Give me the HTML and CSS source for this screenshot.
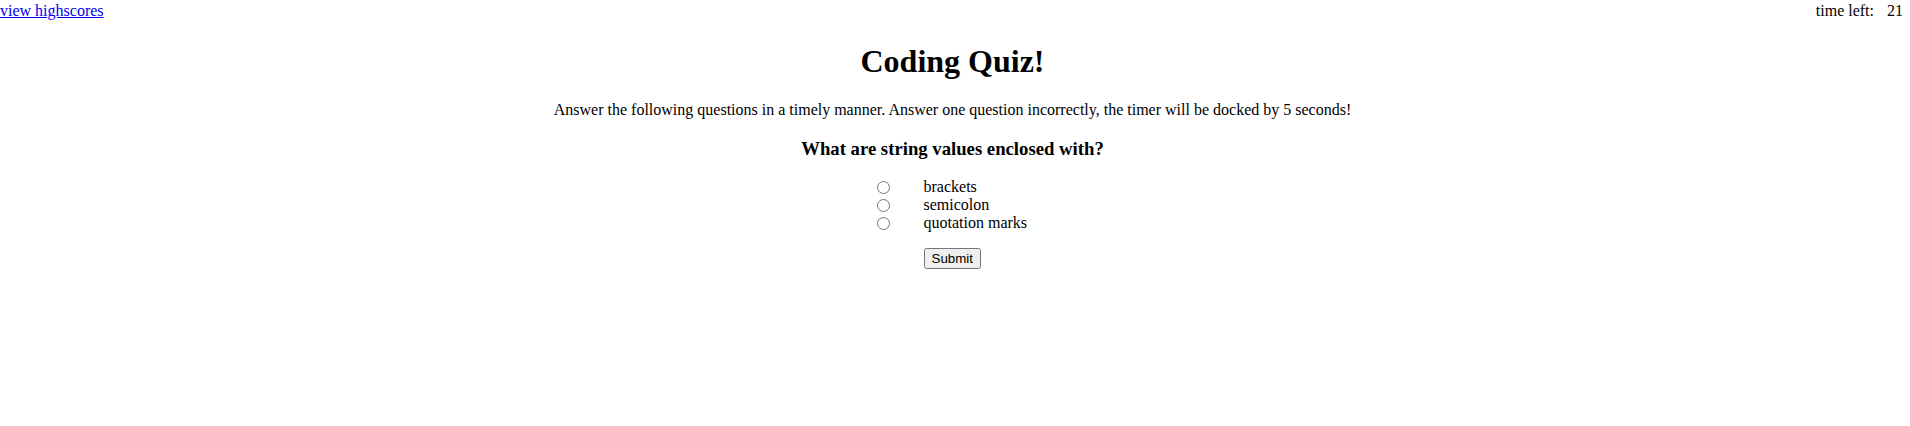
FILE: index.html
```html
<!DOCTYPE html>
<html>
<head>
<meta charset="utf-8">
<title>Coding Quiz</title>
<link rel="stylesheet" href="styles.css">
</head>
<body>
<header class="topbar">
  <a class="scores-link" href="#">view highscores</a>
  <div class="timer"><span class="timer-label">time left:</span><span class="timer-value">21</span></div>
</header>
<main class="quiz">
  <h1 class="title">Coding Quiz!</h1>
  <p class="intro">Answer the following questions in a timely manner. Answer one question incorrectly, the timer will be docked by 5 seconds!</p>
  <h3 class="question">What are string values enclosed with?</h3>
  <form class="answers">
    <label class="choice"><input type="radio" name="a" class="radio"><span class="choice-text">brackets</span></label>
    <label class="choice"><input type="radio" name="a" class="radio"><span class="choice-text">semicolon</span></label>
    <label class="choice"><input type="radio" name="a" class="radio"><span class="choice-text">quotation marks</span></label>
    <div class="submit-row"><button type="button" class="submit">Submit</button></div>
  </form>
</main>
</body>
</html>
```
FILE: styles.css
```css
html, body {
  margin: 0;
  padding: 0;
  background: #ffffff;
}
body {
  font-family: "Liberation Serif", "Times New Roman", serif;
  font-size: 16px;
  color: #000;
}
.topbar {
  display: flex;
  justify-content: space-between;
  align-items: flex-start;
  padding: 2px 7px 0 0;
}
.scores-link {
  color: #0000ee;
  text-decoration: underline;
}
.timer-label {
  margin-right: 13px;
}
.quiz {
  text-align: center;
  padding-right: 5px;
}
.title {
  font-size: 32px;
  font-weight: bold;
  margin: 22.5px 0 21.44px;
}
.intro {
  margin: 16px 0;
}
.question {
  font-size: 18.72px;
  margin: 18.72px 0;
}
.answers {
  display: flex;
  flex-direction: column;
  align-items: flex-start;
  width: 152px;
  margin: 0 auto;
  text-align: left;
}
.choice {
  display: flex;
  align-items: center;
  height: 18px;
}
.radio {
  width: 13px;
  height: 13px;
  margin: 0 34px 0 0;
}
.submit-row {
  margin-top: 16px;
  padding-left: 47px;
}
.submit {
  font-family: "Liberation Sans", Arial, sans-serif;
  font-size: 13.333px;
  padding: 1px 6px;
}
```
